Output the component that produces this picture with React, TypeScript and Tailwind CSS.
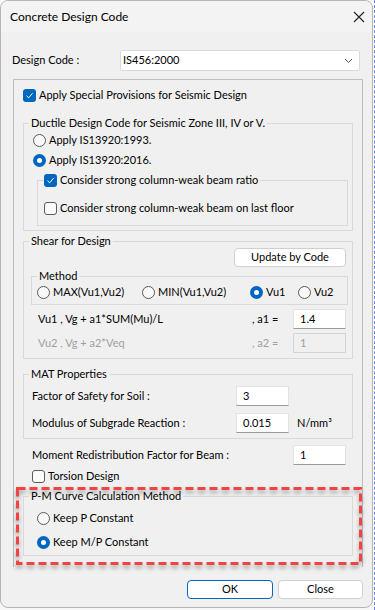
import type { ReactNode } from "react";

const FONT = "font-['Lato','Liberation_Sans',sans-serif]";

function Radio({ checked, label, className = "" }: { checked?: boolean; label: string; className?: string }) {
  return (
    <div className={`flex h-[16px] items-center ${className}`}>
      {checked ? (
        <span className="grid h-[13px] w-[13px] shrink-0 place-items-center rounded-full bg-[#0067c0]">
          <span className="h-[5px] w-[5px] rounded-full bg-white" />
        </span>
      ) : (
        <span className="h-[13px] w-[13px] shrink-0 rounded-full border border-[#5a5a5a] bg-[#f8f8f8]" />
      )}
      <span className="ml-[3px] whitespace-nowrap">{label}</span>
    </div>
  );
}

function Check({ checked, label, className = "" }: { checked?: boolean; label: string; className?: string }) {
  return (
    <div className={`flex h-[16px] items-center ${className}`}>
      {checked ? (
        <span className="grid h-[13px] w-[13px] shrink-0 place-items-center rounded-[3px] bg-[#0067c0]">
          <svg width="9" height="9" viewBox="0 0 9 9" fill="none">
            <path d="M1.5 4.8 L3.6 6.8 L7.6 2.2" stroke="white" strokeWidth="1" />
          </svg>
        </span>
      ) : (
        <span className="h-[13px] w-[13px] shrink-0 rounded-[3px] border border-[#5c5c5c] bg-[#fbfbfb]" />
      )}
      <span className="ml-[3px] whitespace-nowrap">{label}</span>
    </div>
  );
}

function Group({ label, className = "", children }: { label: ReactNode; className?: string; children: ReactNode }) {
  return (
    <fieldset className={`border border-[#d9d9d9] ${className}`}>
      <legend className="ml-[5px] px-[2px] leading-[16px]">{label}</legend>
      {children}
    </fieldset>
  );
}

function TextBox({ value, disabled, className = "" }: { value: string; disabled?: boolean; className?: string }) {
  return (
    <div
      className={`flex h-[20px] w-[53px] items-center border pl-[6px] ${
        disabled
          ? "border-[#d4d4d4] bg-[#f0f0f0] text-[#a0a0a0]"
          : "border-[#e3e3e3] border-b-[#9a9a9a] bg-white"
      } ${className}`}
    >
      {value}
    </div>
  );
}

function Button({ label, primary, className = "" }: { label: string; primary?: boolean; className?: string }) {
  return (
    <div
      className={`flex items-center justify-center rounded-[4px] border bg-white ${
        primary ? "border-[#0067c0]" : "border-[#d0d0d0]"
      } ${className}`}
    >
      {label}
    </div>
  );
}

export default function App() {
  return (
    <div className={`relative flex h-[610px] w-[375px] bg-[#f7f7f7] text-[11px] text-black ${FONT}`}>
      <div className="flex h-[608px] w-[373px] flex-col overflow-hidden rounded-[8px] border border-[#b5b5b5] bg-[#f0f0f0]">
        <div className="flex h-[31px] shrink-0 items-center justify-between bg-[#f3f3f3] pl-[9px] pr-[7px]">
          <span className="text-[12px]">Concrete Design Code</span>
          <svg width="12" height="12" viewBox="0 0 12 12" fill="none">
            <path d="M1 1 L11 11 M11 1 L1 11" stroke="#222" strokeWidth="1.1" />
          </svg>
        </div>

        <div className="flex flex-col pl-[11px]">
          <div className="mt-[18px] flex h-[21px] items-center">
            <span className="w-[108px]">Design Code :</span>
            <div className="flex h-[21px] w-[240px] items-center justify-between rounded-[2px] border border-[#dadada] bg-white pl-[2px] pr-[6px]">
              <span>IS456:2000</span>
              <svg width="9" height="6" viewBox="0 0 9 6" fill="none">
                <path d="M1 1 L4.5 4.5 L8 1" stroke="#555" strokeWidth="1" />
              </svg>
            </div>
          </div>

          <div className="ml-[1px] mt-[8px] flex h-[488px] w-[350px] flex-col border-x border-t border-[#bdbdbd] pl-[9px]">
            <Check checked label="Apply Special Provisions for Seismic Design" className="mt-[7px]" />

            <Group label="Ductile Design Code for Seismic Zone III, IV or V." className="mt-[12px] w-[330px] pb-[4px]">
              <Radio label="Apply IS13920:1993." className="mt-[1px] pl-[9px]" />
              <Radio checked label="Apply IS13920:2016." className="mt-[4px] pl-[9px]" />
              <fieldset className="ml-[13px] mt-[4px] w-[311px] border border-[#d9d9d9] pb-[9px] pl-[6px]">
                <legend className="pr-[2px]">
                  <Check checked label="Consider strong column-weak beam ratio" />
                </legend>
                <Check label="Consider strong column-weak beam on last floor" className="mt-[12px]" />
              </fieldset>
            </Group>

            <Group label="Shear for Design" className="mt-[2px] w-[330px] pb-[5px]">
              <div className="-mt-[1px] flex justify-end pr-[6px]">
                <Button label="Update by Code" className="h-[19px] w-[112px]" />
              </div>
              <fieldset className="ml-[7px] mt-[1px] w-[317px] border border-[#d9d9d9] pb-[4px] pl-[5px]">
                <legend className="px-[2px] leading-[16px]">Method</legend>
                <div className="flex">
                  <Radio label="MAX(Vu1,Vu2)" className="w-[105px]" />
                  <Radio label="MIN(Vu1,Vu2)" className="w-[108px]" />
                  <Radio checked label="Vu1" className="w-[48px]" />
                  <Radio label="Vu2" />
                </div>
              </fieldset>
              <div className="mt-[4px] flex h-[20px] items-center pl-[14px]">
                <span className="w-[214px]">Vu1 , Vg + a1*SUM(Mu)/L</span>
                <span className="w-[41px]">, a1 =</span>
                <TextBox value="1.4" />
              </div>
              <div className="mt-[4px] flex h-[20px] items-center pl-[14px] text-[#a0a0a0]">
                <span className="w-[214px]">Vu2 , Vg + a2*Veq</span>
                <span className="w-[41px]">, a2 =</span>
                <TextBox value="1" disabled />
              </div>
            </Group>

            <Group label="MAT Properties" className="mt-[7px] w-[330px] pb-[5px]">
              <div className="mt-[4px] flex h-[20px] items-center pl-[8px]">
                <span className="w-[204px]">Factor of Safety for Soil :</span>
                <TextBox value="3" />
              </div>
              <div className="mt-[7px] flex h-[20px] items-center pl-[8px]">
                <span className="w-[204px]">Modulus of Subgrade Reaction :</span>
                <TextBox value="0.015" />
                <span className="ml-[8px]">N/mm³</span>
              </div>
            </Group>

            <div className="mt-[6px] flex h-[20px] items-center pl-[9px]">
              <span className="w-[261px]">Moment Redistribution Factor for Beam :</span>
              <TextBox value="1" />
            </div>
            <Check label="Torsion Design" className="mt-[3px] pl-[9px]" />

            <Group label="P-M Curve Calculation Method" className="mt-[4px] w-[330px] pb-[5px]">
              <Radio label="Keep P Constant" className="mt-[6px] pl-[13px]" />
              <Radio checked label="Keep M/P Constant" className="mt-[8px] pl-[13px]" />
            </Group>
          </div>

          <div className="mt-[13px] flex gap-[5px] pl-[175px]">
            <Button primary label="OK" className="h-[19px] w-[86px]" />
            <Button label="Close" className="h-[19px] w-[85px]" />
          </div>
        </div>
      </div>
      <div className="h-full w-[2px] border-r border-dashed border-[#6d7fe0] bg-white" />

      <svg
        className="absolute left-[16px] top-[487px] drop-shadow-[0_3px_2px_rgba(0,0,0,0.35)]"
        width="346"
        height="78"
        viewBox="0 0 346 78"
        fill="none"
      >
        <rect x="1.5" y="1.5" width="343" height="75" stroke="#ef4444" strokeWidth="3" strokeDasharray="8 4" />
      </svg>
    </div>
  );
}
